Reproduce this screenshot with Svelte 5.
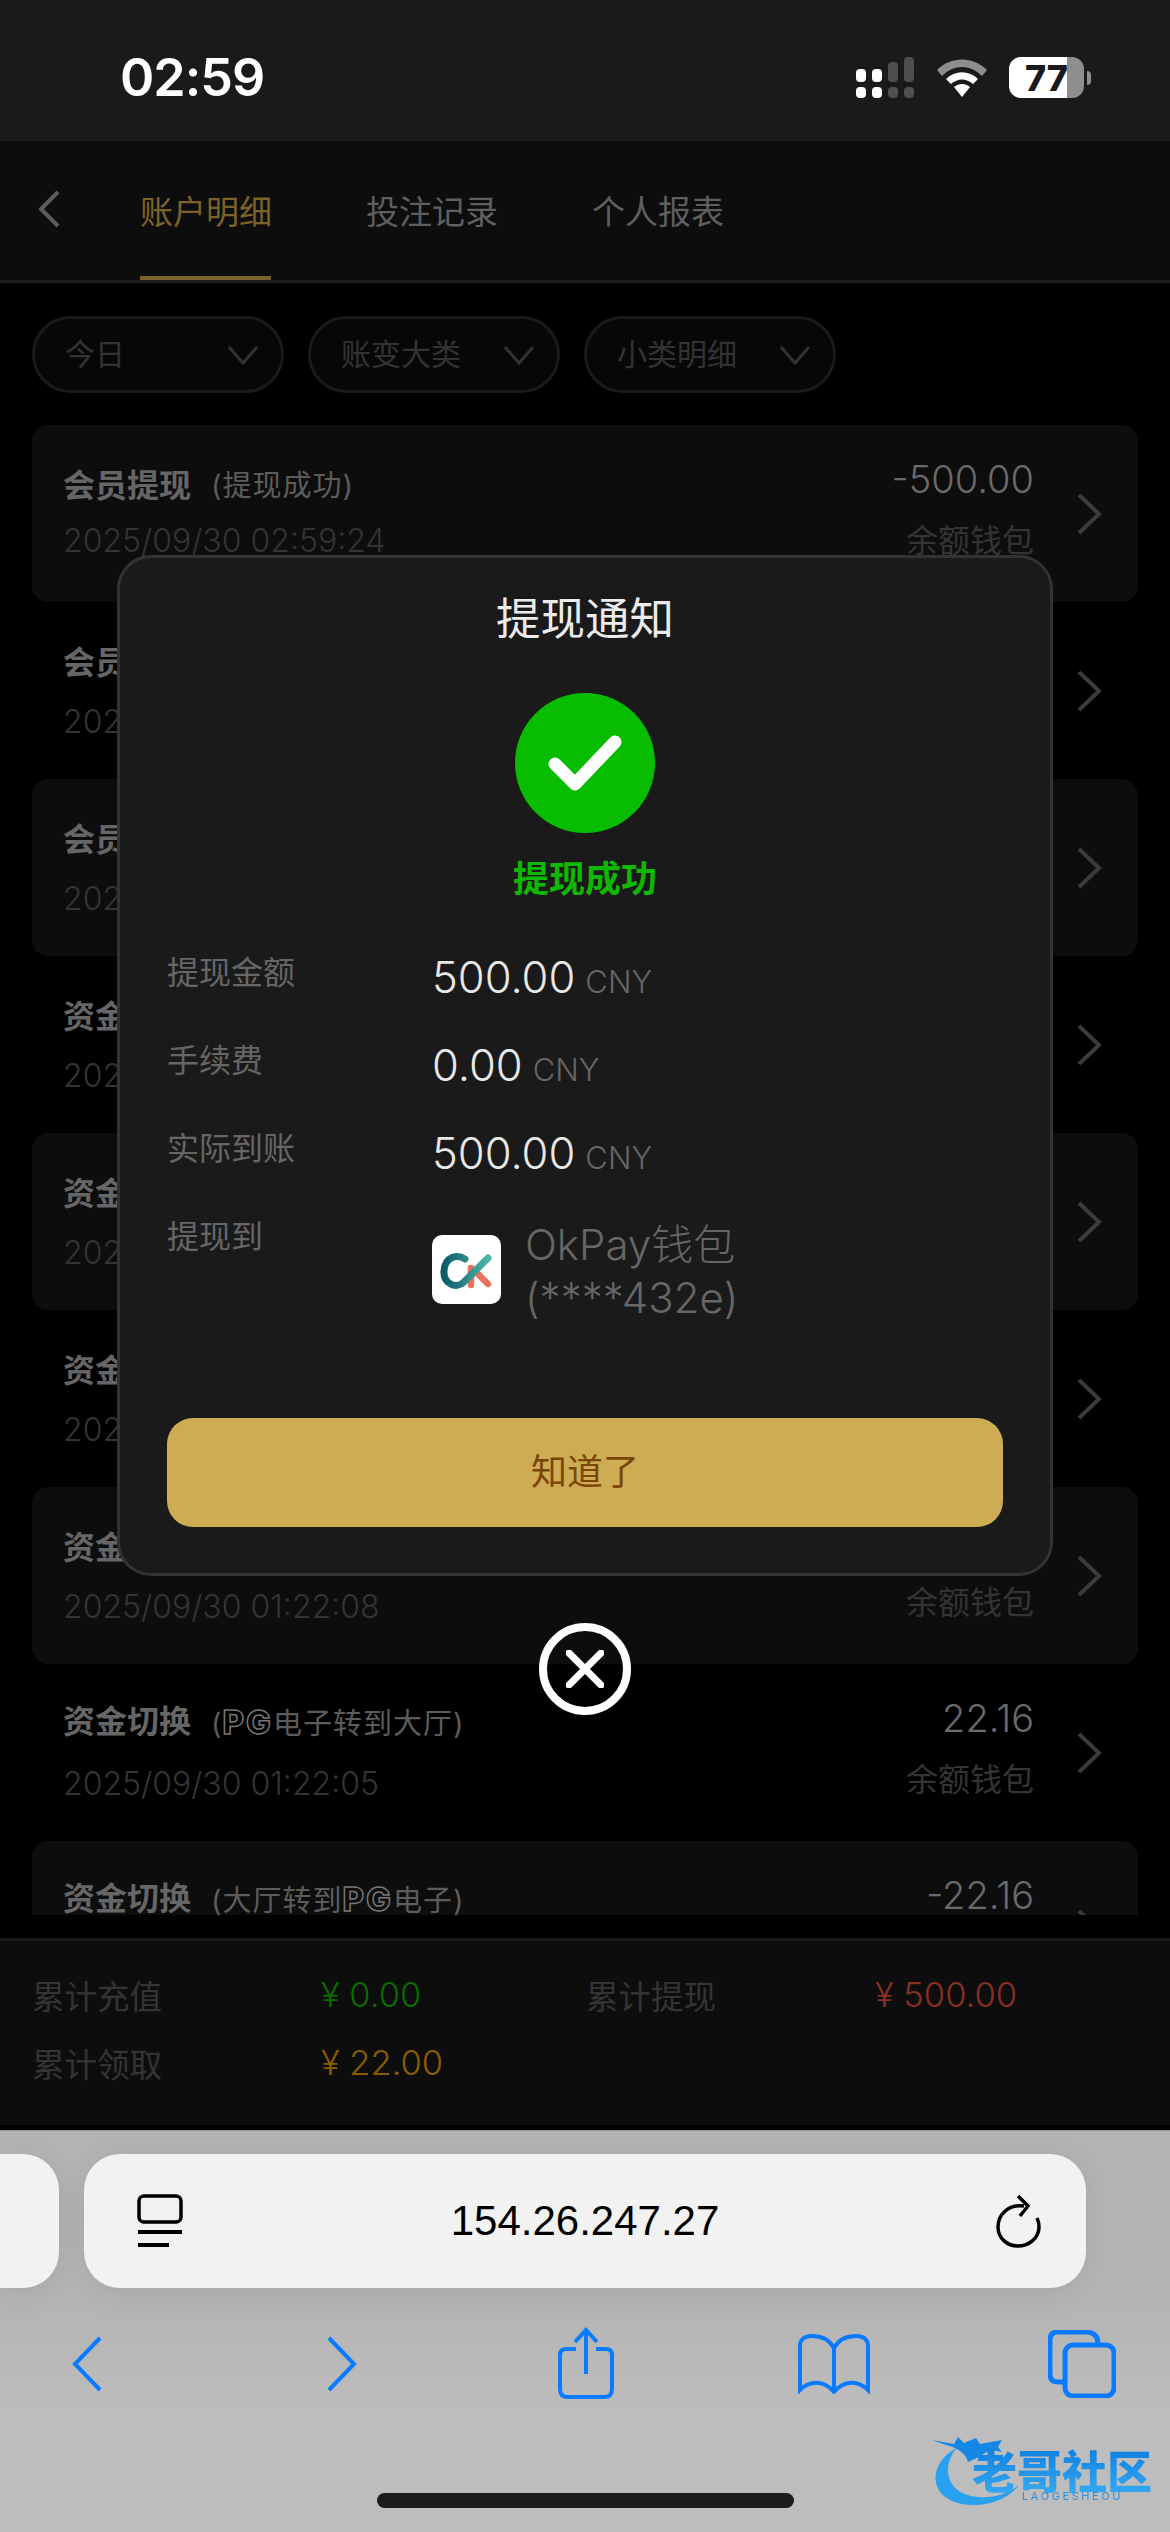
<script>
	const filters = ['今日', '账变大类', '小类明细'];

	const records = [
		{ title: '会员提现', sub: '(提现成功)', date: '2025/09/30 02:59:24', amount: '-500.00' },
		{ title: '会员领取', sub: '', date: '2025/09/30 02:58:10', amount: '10.00' },
		{ title: '会员领取', sub: '', date: '2025/09/30 02:58:02', amount: '12.00' },
		{ title: '资金切换', sub: '', date: '2025/09/30 01:22:20', amount: '22.16' },
		{ title: '资金切换', sub: '', date: '2025/09/30 01:22:16', amount: '-22.16' },
		{ title: '资金切换', sub: '', date: '2025/09/30 01:22:12', amount: '22.16' },
		{ title: '资金切换', sub: '', date: '2025/09/30 01:22:08', amount: '-22.16' },
		{ title: '资金切换', pre: '(', pg: true, post: '电子转到大厅)', date: '2025/09/30 01:22:05', amount: '22.16' },
		{ title: '资金切换', pre: '(大厅转到', pg: true, post: '电子)', date: '2025/09/30 01:22:01', amount: '-22.16' }
	];

	const details = [
		{ label: '提现金额', value: '500.00' },
		{ label: '手续费', value: '0.00' },
		{ label: '实际到账', value: '500.00' }
	];
</script>

<div class="phone">
	<div class="status">
		<span class="time">02:59</span>
		<svg class="signal" width="58" height="42" viewBox="0 0 58 42">
			<g fill="#fff">
				<rect x="0" y="12" width="10" height="13" rx="4" />
				<rect x="16" y="12" width="10" height="13" rx="4" />
				<rect x="0" y="30" width="10" height="11" rx="4" />
				<rect x="16" y="30" width="10" height="11" rx="4" />
			</g>
			<g fill="#4f4f4f">
				<rect x="32" y="5" width="10" height="20" rx="4" />
				<rect x="48" y="0" width="10" height="25" rx="4" />
				<rect x="32" y="30" width="10" height="11" rx="4" />
				<rect x="48" y="30" width="10" height="11" rx="4" />
			</g>
		</svg>
		<svg class="wifi" width="50" height="38" viewBox="0 0 50 38">
			<path d="M0 11 C14 -3 36 -3 50 11 L45 17 C33 5 17 5 5 17 Z" fill="#8e8e8e" />
			<path d="M9 20 C18 11 32 11 41 20 L36 25 C29 19 21 19 14 25 Z" fill="#fff" />
			<path d="M17 28 C22 24 28 24 33 28 L25 38 Z" fill="#fff" />
		</svg>
		<div class="battery">
			<span class="battery-text">77</span>
		</div>
		<div class="battery-nub"></div>
	</div>

	<div class="header">
		<svg class="back" width="24" height="38" viewBox="0 0 24 38">
			<path d="M21 2 L4 19 L21 36" />
		</svg>
		<div class="tab active">账户明细</div>
		<div class="tab">投注记录</div>
		<div class="tab">个人报表</div>
	</div>

	<div class="filters">
		{#each filters as item}
			<div class="filter">
				<span>{item}</span>
				<svg width="32" height="20" viewBox="0 0 32 20"><path d="M2 2 L16 18 L30 2" /></svg>
			</div>
		{/each}
	</div>

	<div class="list">
		{#each records as row, i}
			<div class="row" class:card={i % 2 === 0} class:switch={row.pg}>
				<div class="left">
					<div class="title">
						<b>{row.title}</b>
						{#if row.pg}
							<span class="sub">{row.pre}<span class="pg">PG</span>{row.post}</span>
						{:else}
							<span class="sub">{row.sub}</span>
						{/if}
					</div>
					<div class="date">{row.date}</div>
				</div>
				<div class="right">
					<div class="amount">{row.amount}</div>
					<div class="wallet">余额钱包</div>
				</div>
				<svg class="more" width="26" height="42" viewBox="0 0 26 42"><path d="M3 2 L23 21 L3 40" /></svg>
			</div>
		{/each}
	</div>

	<div class="totals">
		<span class="label">累计充值</span>
		<span class="green">¥ 0.00</span>
		<span class="label">累计提现</span>
		<span class="red">¥ 500.00</span>
		<span class="label">累计领取</span>
		<span class="amber">¥ 22.00</span>
	</div>

	<div class="chrome">
		<div class="tabs-row">
			<div class="stub"></div>
			<div class="url">
				<svg width="46" height="54" viewBox="0 0 46 54">
					<rect x="2" y="2" width="42" height="26" rx="5" fill="none" stroke="#000" stroke-width="3.5" />
					<rect x="1" y="36" width="44" height="4" fill="#000" />
					<rect x="1" y="49" width="31" height="4" fill="#000" />
				</svg>
				<span class="address">154.26.247.27</span>
				<svg width="46" height="54" viewBox="0 0 46 54" fill="none" stroke="#000" stroke-width="3.5">
					<path d="M28 12 C12 10 2 21 2 33 C2 44 11 52 22 52 C33 52 43 44 43 33 C43 29 42 26 41 24" />
					<path d="M22 2 L32 12 L24 22" />
				</svg>
			</div>
		</div>

		<div class="nav">
			<svg class="nav-back" width="30" height="56" viewBox="0 0 30 56"><path d="M28 2 L3 28 L28 54" /></svg>
			<svg class="nav-forward" width="30" height="56" viewBox="0 0 30 56"><path d="M2 2 L27 28 L2 54" /></svg>
			<svg class="nav-share" width="56" height="72" viewBox="0 0 56 72">
				<path d="M18 22 H8 Q2 22 2 28 V62 Q2 70 10 70 H46 Q54 70 54 62 V28 Q54 22 48 22 H38" />
				<path d="M28 47 V3 M17 15 L28 3 L39 15" />
			</svg>
			<svg class="nav-book" width="72" height="60" viewBox="0 0 72 60">
				<path d="M36 14 C31 5 22 2 14 2 C6 2 2 6 2 12 V56 C12 46 26 46 36 58 C46 46 60 46 70 56 V12 C70 6 66 2 58 2 C50 2 41 5 36 14 V58" />
			</svg>
			<svg class="nav-tabs" width="68" height="68" viewBox="0 0 68 68">
				<path d="M17 52 H10 Q2 52 2 44 V10 Q2 2 10 2 H38 Q50 2 50 14" />
				<rect x="17" y="15" width="49" height="51" rx="8" />
			</svg>
		</div>

		<div class="home"></div>
	</div>

	<div class="watermark">
		<svg width="110" height="72" viewBox="0 0 110 72">
			<path d="M26 12 C-8 30 -4 70 42 70 C62 70 78 62 87 50 C74 60 60 63 46 62 C14 60 8 30 26 12 Z" fill="#2aa0f0" />
			<path d="M0 5 L22 9 L26 2 L32 8 L44 3 L48 9 L70 5 L66 12 L70 17 L58 15 C50 20 44 24 36 27 C34 18 24 12 14 10 Z" fill="#1587e6" />
		</svg>
		<span class="wm-name">老哥社区</span>
		<span class="wm-sub">LAOGESHEOU</span>
	</div>

	<div class="overlay">
		<div class="dialog">
			<div class="dialog-title">提现通知</div>
			<div class="tick">
				<svg width="76" height="58" viewBox="0 0 76 58" fill="none">
					<path d="M8 30 L28 50 L68 8" stroke="#fff" stroke-width="13" stroke-linecap="round" stroke-linejoin="round" />
				</svg>
			</div>
			<div class="success">提现成功</div>
			<div class="details">
				{#each details as item}
					<div class="detail">
						<span class="detail-label">{item.label}</span>
						<span class="detail-value">{item.value}<small>CNY</small></span>
					</div>
				{/each}
				<div class="detail">
					<span class="detail-label">提现到</span>
					<div class="wallet-to">
						<div class="logo">
							<svg width="69" height="69" viewBox="0 0 69 69" fill="none" stroke-linecap="round">
								<defs>
									<linearGradient id="ck" x1="0" y1="0" x2="1" y2="0">
										<stop offset="0" stop-color="#0b5c6b" />
										<stop offset="1" stop-color="#4db6a6" />
									</linearGradient>
								</defs>
								<path d="M39 33 V50 M42 35 L56 49" stroke="#e9715f" stroke-width="6.5" />
								<path d="M33 24 C26 19 13 21 12 36 C11 48 24 55 32 47 L56 23" stroke="url(#ck)" stroke-width="7" />
							</svg>
						</div>
						<div class="wallet-name">OkPay钱包<br />(****432e)</div>
					</div>
				</div>
			</div>
			<div class="confirm">知道了</div>
		</div>
		<div class="close">
			<svg width="38" height="38" viewBox="0 0 38 38"><path d="M3 3 L35 35 M35 3 L3 35" /></svg>
		</div>
	</div>
</div>

<style>
	:global(body) {
		margin: 0;
		background: #000;
	}

	.phone {
		position: relative;
		width: 1170px;
		height: 2532px;
		display: flex;
		flex-direction: column;
		overflow: hidden;
		background: #000;
		font-family: Inter, "Noto Sans CJK SC", sans-serif;
	}

	/* status bar */
	.status {
		height: 141px;
		flex: none;
		display: flex;
		align-items: center;
		background: #1a1a1a;
		padding: 14px 79px 0 120px;
		box-sizing: border-box;
	}

	.time {
		color: #fff;
		font-size: 52px;
		font-weight: 600;
		letter-spacing: -1px;
		margin-right: auto;
	}

	.signal {
		margin-right: 23px;
	}

	.wifi {
		margin-right: 22px;
	}

	.battery {
		width: 75px;
		height: 41px;
		border-radius: 12px;
		background: linear-gradient(90deg, #fff 77%, #8e8e8e 77%);
		display: flex;
		align-items: center;
		justify-content: center;
	}

	.battery-text {
		color: #1a1a1a;
		font-size: 36px;
		font-weight: 800;
		line-height: 1;
	}

	.battery-nub {
		width: 4px;
		height: 14px;
		margin-left: 3px;
		border-radius: 0 4px 4px 0;
		background: #8e8e8e;
	}

	/* tabs */
	.header {
		height: 142px;
		flex: none;
		display: flex;
		box-sizing: border-box;
		padding-left: 37px;
		align-items: stretch;
		background: #0d0d0d;
		border-bottom: 3px solid #1d1d1d;
	}

	.back {
		align-self: center;
		margin-right: 79px;
		margin-top: -3px;
		fill: none;
		stroke: #5c5c5c;
		stroke-width: 4;
	}

	.tab {
		width: 131px;
		margin-right: 95px;
		font-size: 33px;
		line-height: 142px;
		color: #5f5f5f;
		white-space: nowrap;
		box-sizing: border-box;
		height: 139px;
	}

	.tab.active {
		color: #7c6229;
		border-bottom: 4px solid #7c6229;
	}

	/* filters */
	.filters {
		display: flex;
		gap: 24px;
		padding: 33px 32px 32px;
		flex: none;
	}

	.filter {
		width: 252px;
		height: 77px;
		box-sizing: border-box;
		border: 3px solid #1a1a1a;
		border-radius: 39px;
		display: flex;
		align-items: center;
		justify-content: space-between;
		padding: 0 22px 6px 30px;
		background: #070707;
		color: #333;
		font-size: 30px;
	}

	.filter svg {
		margin-top: 6px;
		fill: none;
		stroke: #333;
		stroke-width: 3;
	}

	/* records */
	.list {
		height: 1490px;
		flex: none;
		padding: 0 32px;
		overflow: hidden;
	}

	.row {
		height: 177px;
		box-sizing: border-box;
		display: flex;
		padding: 0 36px 0 31px;
		border-radius: 16px;
	}

	.row.card {
		background: #0d0d0d;
	}

	.left {
		flex: 1;
		padding-top: 38px;
	}

	.switch .left {
		padding-top: 35px;
	}

	.title {
		height: 46px;
		line-height: 46px;
		display: flex;
		gap: 20px;
		color: #666;
		white-space: nowrap;
	}

	.title b {
		font-size: 32px;
		font-weight: 700;
	}

	.sub {
		font-size: 29px;
		letter-spacing: 1px;
		color: #5c5c5c;
	}

	.pg {
		font-size: 33px;
		font-weight: 800;
		color: transparent;
		-webkit-text-stroke: 1.5px #777;
		letter-spacing: 2px;
	}

	.date {
		margin-top: 13px;
		line-height: 46px;
		font-size: 32px;
		font-weight: 300;
		color: #343434;
	}

	.row:first-child .date {
		margin-top: 9px;
	}

	.switch .date {
		margin-top: 16px;
	}

	.right {
		padding-top: 31px;
		text-align: right;
		margin-right: 42px;
	}

	.amount {
		line-height: 46px;
		font-size: 38px;
		font-weight: 300;
		color: #6a6a6a;
	}

	.wallet {
		margin-top: 16px;
		line-height: 46px;
		font-size: 32px;
		color: #343434;
	}

	.more {
		align-self: center;
		fill: none;
		stroke: #3b3b3b;
		stroke-width: 4;
	}

	/* totals */
	.totals {
		margin-top: 23px;
		height: 187px;
		flex: none;
		box-sizing: border-box;
		border-top: 3px solid #1a1a1a;
		background: #0d0d0d;
		padding: 33px 0 0 32px;
		display: grid;
		grid-template-columns: 289px 265px 289px 1fr;
		grid-auto-rows: 40px;
		row-gap: 28px;
		align-items: center;
		font-size: 34.5px;
		font-weight: 300;
	}

	.label {
		color: #343434;
		font-size: 32.5px;
		font-weight: 400;
	}

	.green {
		color: #0b6a00;
	}

	.red {
		color: #8a2f23;
	}

	.amber {
		color: #8a5c00;
	}

	/* browser chrome */
	.chrome {
		margin-top: 5px;
		flex: 1;
		display: flex;
		flex-direction: column;
		background: linear-gradient(#b3b3b3, #b5b5b5 45%, #bdbdbd 70%);
		border-top: 1px solid #8f8f8f;
		box-sizing: border-box;
	}

	.tabs-row {
		display: flex;
		gap: 25px;
		padding-top: 23px;
	}

	.stub {
		width: 59px;
		height: 134px;
		background: #f2f2f2;
		border-radius: 0 36px 36px 0;
		box-shadow: 0 6px 30px rgba(0, 0, 0, 0.08);
	}

	.url {
		width: 1002px;
		height: 134px;
		box-sizing: border-box;
		padding: 0 44px;
		display: flex;
		align-items: center;
		justify-content: space-between;
		background: #f2f2f2;
		border-radius: 36px;
		box-shadow: 0 6px 30px rgba(0, 0, 0, 0.08);
	}

	.url svg {
		margin-left: 9px;
	}

	.address {
		font-family: "Liberation Sans", sans-serif;
		font-size: 42px;
		color: #000;
	}

	.nav {
		display: flex;
		align-items: center;
		height: 74px;
		margin-top: 39px;
		padding-left: 72px;
	}

	.nav svg {
		flex: none;
		fill: none;
		stroke: #0a7aff;
		stroke-width: 4;
	}

	.nav-forward {
		margin-left: 225px;
	}

	.nav-share {
		margin-left: 201px;
		align-self: flex-start;
	}

	.nav-book {
		margin-left: 184px;
	}

	.nav-tabs {
		margin-left: 178px;
	}

	.nav .nav-tabs {
		stroke-width: 5;
	}

	.home {
		width: 417px;
		height: 15px;
		margin: auto auto 24px;
		border-radius: 8px;
		background: #1c1c1c;
	}

	/* watermark */
	.watermark {
		position: absolute;
		left: 932px;
		top: 2435px;
		width: 225px;
		height: 72px;
		filter: blur(0.6px);
	}

	.watermark svg {
		position: absolute;
		left: 0;
		top: 0;
	}

	.wm-name {
		position: absolute;
		left: 40px;
		top: 12px;
		font-size: 45px;
		font-weight: 900;
		line-height: 52px;
		white-space: nowrap;
		color: transparent;
		background: linear-gradient(#0f7fe0, #39adf5);
		-webkit-background-clip: text;
		background-clip: text;
	}

	.wm-sub {
		position: absolute;
		left: 90px;
		top: 55px;
		font-size: 11px;
		letter-spacing: 2.6px;
		color: #2f8fe0;
		line-height: 12px;
	}

	/* dialog */
	.overlay {
		position: absolute;
		left: 117px;
		top: 555px;
		width: 936px;
		display: flex;
		flex-direction: column;
		align-items: center;
	}

	.dialog {
		width: 100%;
		height: 1021px;
		box-sizing: border-box;
		border: 3px solid #333;
		border-radius: 34px;
		background: #1a1a1a;
		padding: 32px 47px 0;
		display: flex;
		flex-direction: column;
		align-items: center;
	}

	.dialog-title {
		font-size: 44.5px;
		line-height: 58px;
		color: #ececec;
	}

	.tick {
		width: 140px;
		height: 140px;
		margin-top: 45px;
		border-radius: 50%;
		background: #08bd00;
		display: flex;
		align-items: center;
		justify-content: center;
	}

	.success {
		margin-top: 24px;
		font-size: 36px;
		font-weight: 700;
		line-height: 44px;
		color: #0fb800;
	}

	.details {
		width: 100%;
		margin-top: 50px;
		display: flex;
		flex-direction: column;
		gap: 44px;
	}

	.detail {
		display: flex;
		height: 44px;
	}

	.detail-label {
		width: 265px;
		flex: none;
		font-size: 32px;
		line-height: 44px;
		color: #666;
	}

	.detail-value {
		font-size: 43.5px;
		font-weight: 300;
		line-height: 52px;
		color: #e8e8e8;
		white-space: nowrap;
	}

	.detail-value small {
		margin-left: 10px;
		font-size: 31px;
		color: #666;
	}

	.wallet-to {
		display: flex;
		gap: 24px;
		align-items: flex-start;
	}

	.logo {
		width: 69px;
		height: 69px;
		margin-top: 20px;
		border-radius: 10px;
		background: #fff;
		flex: none;
	}

	.wallet-name {
		margin-top: 3px;
		font-size: 42px;
		font-weight: 300;
		line-height: 53px;
		color: #666;
		white-space: nowrap;
	}

	.confirm {
		margin-top: 159px;
		width: 836px;
		height: 109px;
		flex: none;
		border-radius: 26px;
		background: #ceac53;
		color: #7b4507;
		font-size: 36px;
		line-height: 109px;
		text-align: center;
	}

	.close {
		width: 92px;
		height: 92px;
		margin-top: 47px;
		box-sizing: border-box;
		border: 8px solid #fff;
		border-radius: 50%;
		display: flex;
		align-items: center;
		justify-content: center;
	}

	.close svg {
		fill: none;
		stroke: #fff;
		stroke-width: 7;
		stroke-linecap: round;
	}
</style>
